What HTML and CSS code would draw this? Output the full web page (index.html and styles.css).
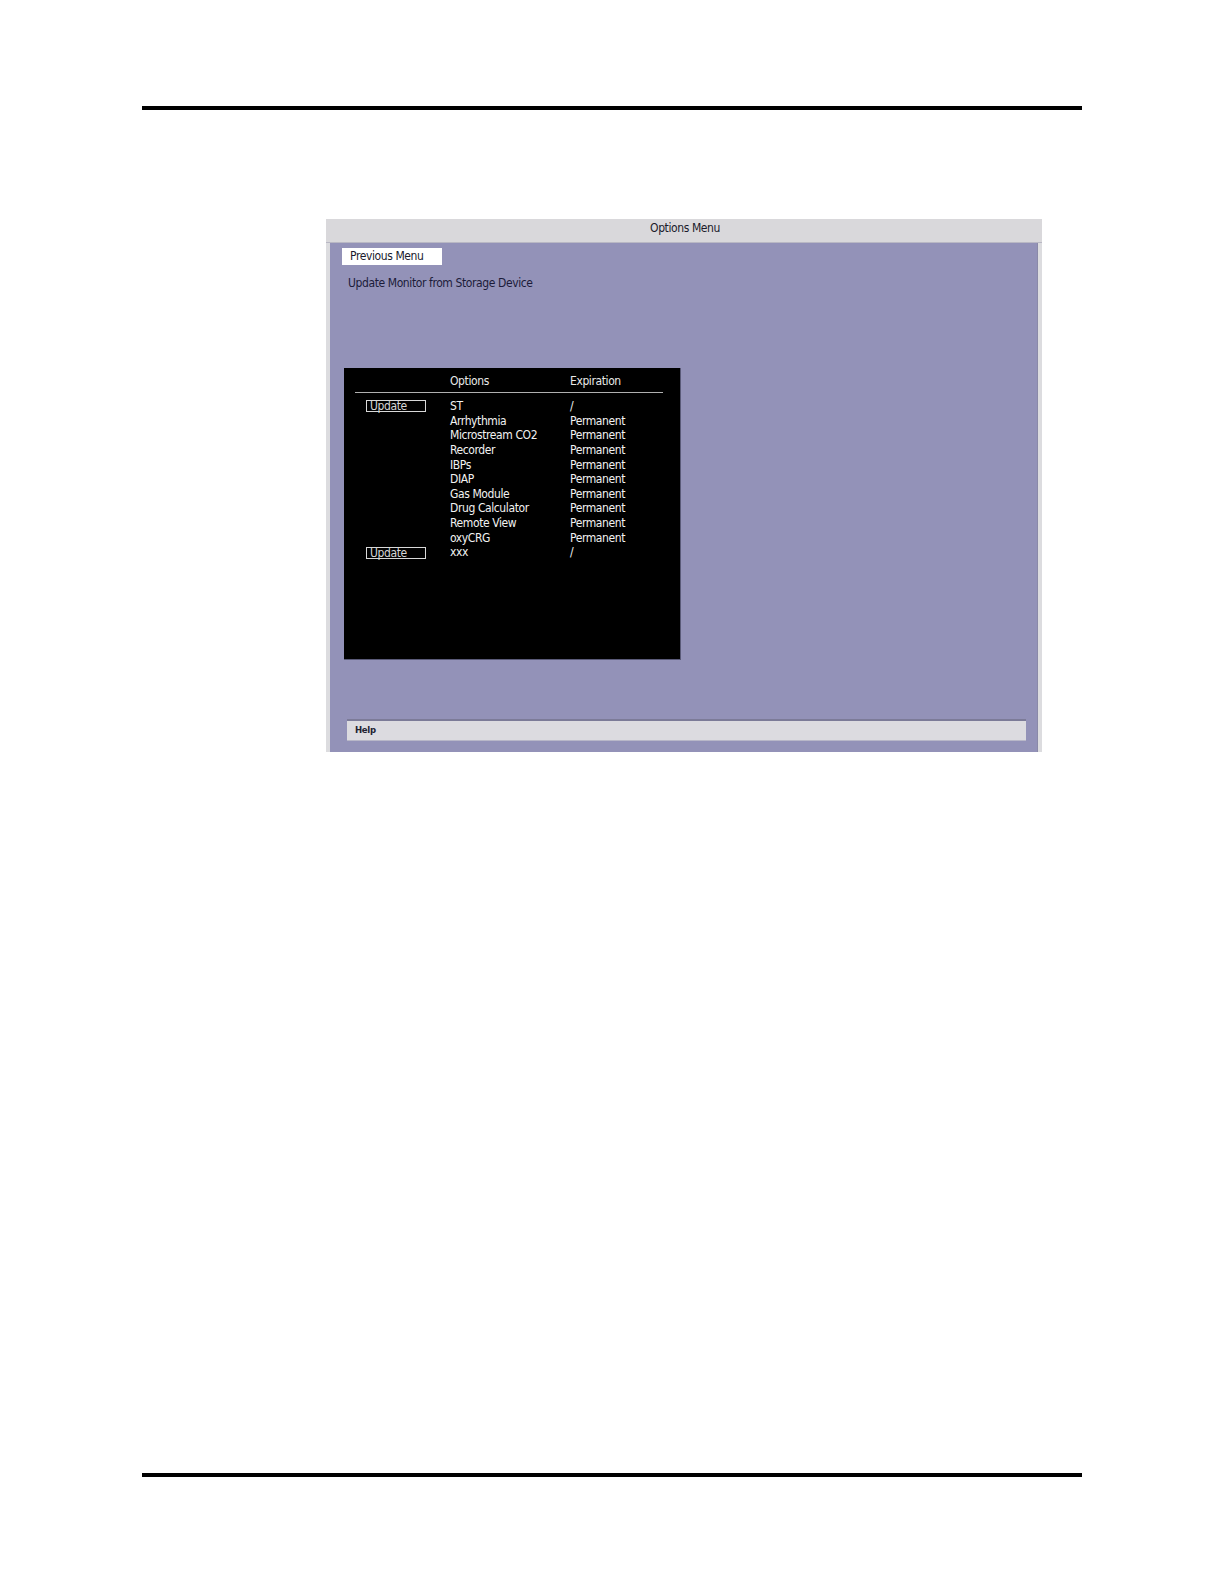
FILE: index.html
```html
<!DOCTYPE html>
<html>
<head>
<meta charset="utf-8">
<link rel="stylesheet" href="styles.css">
</head>
<body>
<div class="page">
  <div class="rule"></div>
  <div class="frame">
    <div class="titlebar">Options Menu</div>
    <div class="body">
      <div class="prev-btn">Previous Menu</div>
      <div class="subtitle">Update Monitor from Storage Device</div>
      <div class="panel">
        <div class="head">
          <span></span><span>Options</span><span>Expiration</span>
        </div>
        <div class="divider"></div>
        <div class="rows">
          <div class="cell"><span class="upd">Update</span></div><div class="cell">ST</div><div class="cell">/</div>
          <div class="cell"></div><div class="cell">Arrhythmia</div><div class="cell">Permanent</div>
          <div class="cell"></div><div class="cell">Microstream CO2</div><div class="cell">Permanent</div>
          <div class="cell"></div><div class="cell">Recorder</div><div class="cell">Permanent</div>
          <div class="cell"></div><div class="cell">IBPs</div><div class="cell">Permanent</div>
          <div class="cell"></div><div class="cell">DIAP</div><div class="cell">Permanent</div>
          <div class="cell"></div><div class="cell">Gas Module</div><div class="cell">Permanent</div>
          <div class="cell"></div><div class="cell">Drug Calculator</div><div class="cell">Permanent</div>
          <div class="cell"></div><div class="cell">Remote View</div><div class="cell">Permanent</div>
          <div class="cell"></div><div class="cell">oxyCRG</div><div class="cell">Permanent</div>
          <div class="cell"><span class="upd">Update</span></div><div class="cell">xxx</div><div class="cell">/</div>
        </div>
      </div>
      <div class="helpbar">Help</div>
    </div>
  </div>
  <div class="rule bottom"></div>
</div>
</body>
</html>
```

FILE: styles.css
```css
html, body {
  margin: 0;
  padding: 0;
  background: #ffffff;
}
body {
  font-family: "DejaVu Sans Condensed", "Liberation Sans Narrow", "Liberation Sans", sans-serif;
  font-stretch: condensed;
}
.page {
  width: 1224px;
  height: 1584px;
  padding-top: 106px;
  box-sizing: border-box;
}
.rule {
  margin-left: 142px;
  width: 940px;
  height: 4px;
  background: #000;
}
.rule.bottom {
  margin-top: 721px;
}
.frame {
  margin-top: 109px;
  margin-left: 326px;
  width: 716px;
  height: 533px;
  display: flex;
  flex-direction: column;
  background: #dcdcdf;
}
.titlebar {
  height: 24px;
  flex: none;
  background: #d9d8db;
  color: #1a1a2a;
  font-size: 12px;
  letter-spacing: -0.4px;
  line-height: 19px;
  text-align: center;
  padding-left: 2px;
  box-sizing: border-box;
  border-bottom: 1px solid #b9b8c4;
}
.body {
  flex: 1;
  margin: 0 4px;
  background: #9392b8;
  position: relative;
  display: flex;
  flex-direction: column;
  padding-top: 5px;
  box-sizing: border-box;
  border-right: 1px solid #8a89a8;
}
.prev-btn {
  margin-left: 12px;
  width: 100px;
  height: 17px;
  background: #ffffff;
  color: #1a1a2e;
  font-size: 12px;
  letter-spacing: -0.4px;
  line-height: 16px;
  padding-left: 8px;
  box-sizing: border-box;
}
.subtitle {
  margin-left: 18px;
  margin-top: 10px;
  font-size: 12px;
  letter-spacing: -0.4px;
  line-height: 16px;
  color: #1c1c3a;
}
.panel {
  margin-top: 77px;
  margin-left: 14px;
  width: 337px;
  height: 292px;
  background: #000;
  color: #f2f2f2;
  font-size: 12px;
  letter-spacing: -0.4px;
  box-sizing: border-box;
  padding-top: 4px;
  border-right: 1px solid #5a5a78;
  border-bottom: 1px solid #5a5a78;
}
.head {
  display: grid;
  grid-template-columns: 84px 120px 1fr;
  padding-left: 22px;
  height: 18px;
  line-height: 18px;
  color: #e8e8e8;
}
.divider {
  margin: 2px 0 0 11px;
  width: 308px;
  height: 1px;
  background: #b0b0b0;
}
.rows {
  margin-top: 6px;
  display: grid;
  grid-template-columns: 84px 120px 1fr;
  grid-auto-rows: 14.65px;
  padding-left: 22px;
  line-height: 14.65px;
}
.cell {
  display: flex;
  align-items: center;
  white-space: nowrap;
}
.upd {
  display: block;
  width: 60px;
  height: 12px;
  border: 1px solid #d8d8d8;
  box-sizing: border-box;
  line-height: 10px;
  padding-left: 3px;
  font-size: 12px;
  color: #d6d6d6;
}
.helpbar {
  margin-top: auto;
  margin-bottom: 11px;
  margin-left: 17px;
  width: 679px;
  height: 22px;
  background: #dcdbe0;
  border-top: 2px solid #7c7b98;
  border-bottom: 1px solid #b8b7c8;
  box-sizing: border-box;
  font-size: 9.5px;
  letter-spacing: -0.3px;
  font-weight: bold;
  color: #222233;
  line-height: 18px;
  padding-left: 8px;
}
```
